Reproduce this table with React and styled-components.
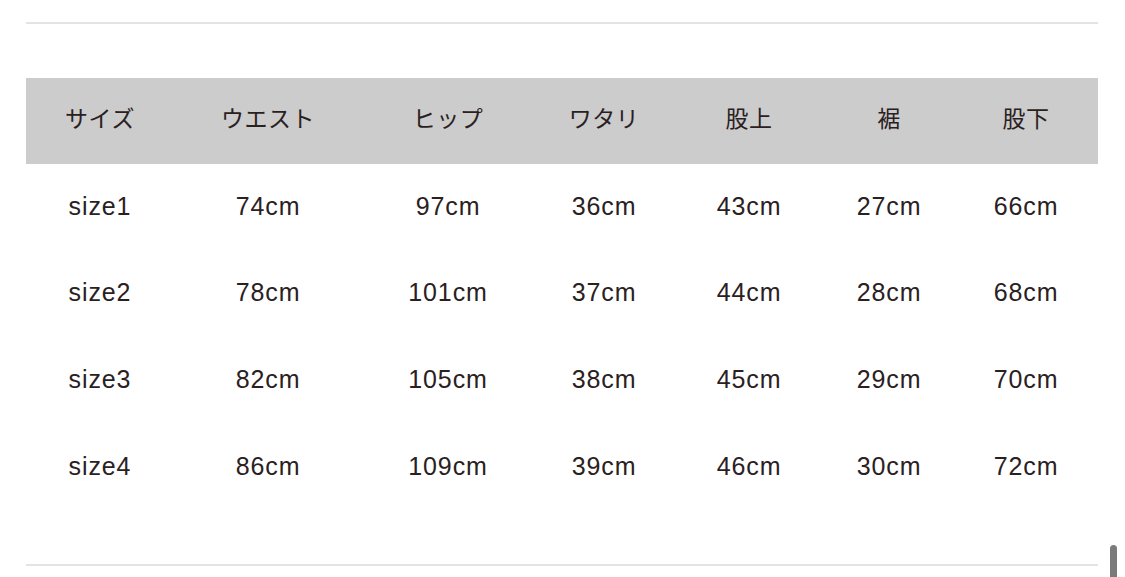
import React from "react";
import styled, { createGlobalStyle } from "styled-components";

const columns = ["サイズ", "ウエスト", "ヒップ", "ワタリ", "股上", "裾", "股下"];
const widths = [148, 188, 172, 140, 150, 130, 144];

const rows = [
  ["size1", "74cm", "97cm", "36cm", "43cm", "27cm", "66cm"],
  ["size2", "78cm", "101cm", "37cm", "44cm", "28cm", "68cm"],
  ["size3", "82cm", "105cm", "38cm", "45cm", "29cm", "70cm"],
  ["size4", "86cm", "109cm", "39cm", "46cm", "30cm", "72cm"],
];

const GlobalStyle = createGlobalStyle`
  html, body {
    margin: 0;
    padding: 0;
    background: #ffffff;
    overflow: hidden;
  }
  body {
    font-family: "Liberation Sans", "Noto Sans CJK JP", sans-serif;
    color: #2a211f;
  }
`;

const Page = styled.div`
  position: relative;
  width: 1125px;
  height: 577px;
  padding: 22px 27px 0 26px;
  box-sizing: border-box;
`;

const Rule = styled.div`
  height: 2px;
  background: #e3e3e3;
`;

const Table = styled.div`
  margin: ${(p) => p.$gap}px 0;
  display: grid;
  grid-template-columns: ${widths.map((w) => `${w}px`).join(" ")};
`;

const HeadCell = styled.div`
  height: 86px;
  background: #cccccc;
  display: flex;
  align-items: center;
  justify-content: center;
  font-family: "Noto Sans CJK JP", sans-serif;
  font-size: 23px;
  line-height: 1;
  font-weight: 400;
  letter-spacing: 0.5px;
  color: #2a211f;
  padding-bottom: 8px;
  box-sizing: border-box;
`;

const Cell = styled.div`
  height: 86.6px;
  display: flex;
  align-items: center;
  justify-content: center;
  font-size: 25px;
  letter-spacing: 0.9px;
  color: #2a211f;
  padding-bottom: 2px;
  box-sizing: border-box;
`;

const ScrollThumb = styled.div`
  position: absolute;
  right: 8px;
  top: 545px;
  width: 7px;
  height: 40px;
  border-radius: 4px;
  background: #7b7b7b;
`;

const App = () => {
  return (
    <>
      <GlobalStyle />
      <Page>
        <Rule />
        <Table $gap={54}>
          {columns.map((c) => (
            <HeadCell key={c}>{c}</HeadCell>
          ))}
          {rows.map((row) =>
            row.map((v, i) => <Cell key={row[0] + i}>{v}</Cell>)
          )}
        </Table>
        <Rule />
        <ScrollThumb />
      </Page>
    </>
  );
};

export default App;
